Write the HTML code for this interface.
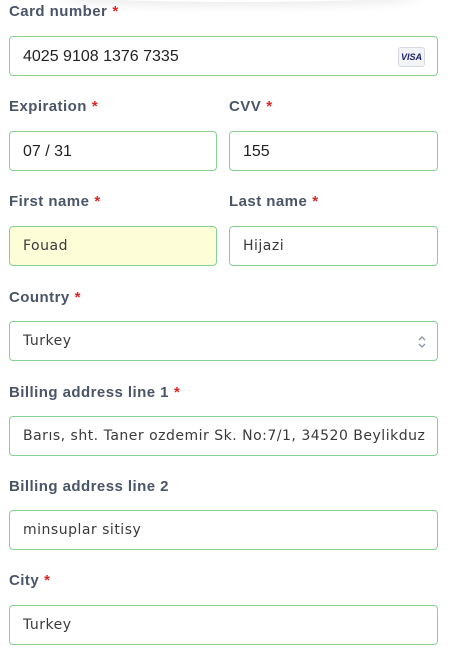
<!DOCTYPE html>
<html><head><meta charset="utf-8"><style>
html,body{margin:0;padding:0;background:#fff;width:459px;height:658px;overflow:hidden;position:relative;font-family:"Liberation Sans",sans-serif}
.shadow{position:absolute;left:60px;top:-14px;width:360px;height:16px;border-radius:50%;box-shadow:0 4px 10px rgba(0,0,0,0.08)}
.lbl{position:absolute;font-size:15px;font-weight:bold;color:#4a5568;line-height:18px;letter-spacing:0.45px}
.lbl b{color:#e02424;font-weight:bold;margin-left:5px}
.in{position:absolute;box-sizing:border-box;height:40px;border:1px solid #84d393;border-radius:4px;background:#fff;font-family:"DejaVu Sans",sans-serif;font-size:14px;color:#3a3a3a;line-height:39px;padding-left:13px;white-space:nowrap;overflow:hidden;letter-spacing:0.5px}
.ar{font-family:"Liberation Sans",sans-serif;font-size:16px;color:#222;letter-spacing:0}
.w{left:9px;width:429px}
.l{left:9px;width:208px}
.r{left:229px;width:209px}
.visa{position:absolute;right:12px;top:10px;width:25px;height:18px;border:1px solid #d6d9e0;border-radius:3px;background:#f3f4f7;font-family:"Liberation Sans",sans-serif;font-size:9px;font-weight:bold;font-style:italic;color:#1a1f71;line-height:18px;text-align:center;letter-spacing:0}
</style></head><body>
<div class="shadow"></div>
<div class="lbl" style="left:9px;top:3px">Card number<b>*</b></div>
<div class="in w ar" style="top:36px">4025 9108 1376 7335<span class="visa">VISA</span></div>
<div class="lbl" style="left:9px;top:98px">Expiration<b>*</b></div>
<div class="lbl" style="left:229px;top:98px">CVV<b>*</b></div>
<div class="in l ar" style="top:131px">07 / 31</div>
<div class="in r ar" style="top:131px">155</div>
<div class="lbl" style="left:9px;top:193px">First name<b>*</b></div>
<div class="lbl" style="left:229px;top:193px">Last name<b>*</b></div>
<div class="in l" style="top:226px;background:#fdfdd8">Fouad</div>
<div class="in r" style="top:226px">Hijazi</div>
<div class="lbl" style="left:9px;top:289px">Country<b>*</b></div>
<div class="in w" style="top:321px">Turkey
<svg style="position:absolute;right:10px;top:13px" width="10" height="14" viewBox="0 0 10 14"><path d="M2 5 L5 2 L8 5 M2 9 L5 12 L8 9" fill="none" stroke="#8a94a6" stroke-width="1.3"/></svg></div>
<div class="lbl" style="left:9px;top:384px">Billing address line 1<b>*</b></div>
<div class="in w" style="top:416px">Barıs, sht. Taner ozdemir Sk. No:7/1, 34520 Beylikduz</div>
<div class="lbl" style="left:9px;top:478px">Billing address line 2</div>
<div class="in w" style="top:510px">minsuplar sitisy</div>
<div class="lbl" style="left:9px;top:572px">City<b>*</b></div>
<div class="in w" style="top:605px">Turkey</div>
</body></html>
